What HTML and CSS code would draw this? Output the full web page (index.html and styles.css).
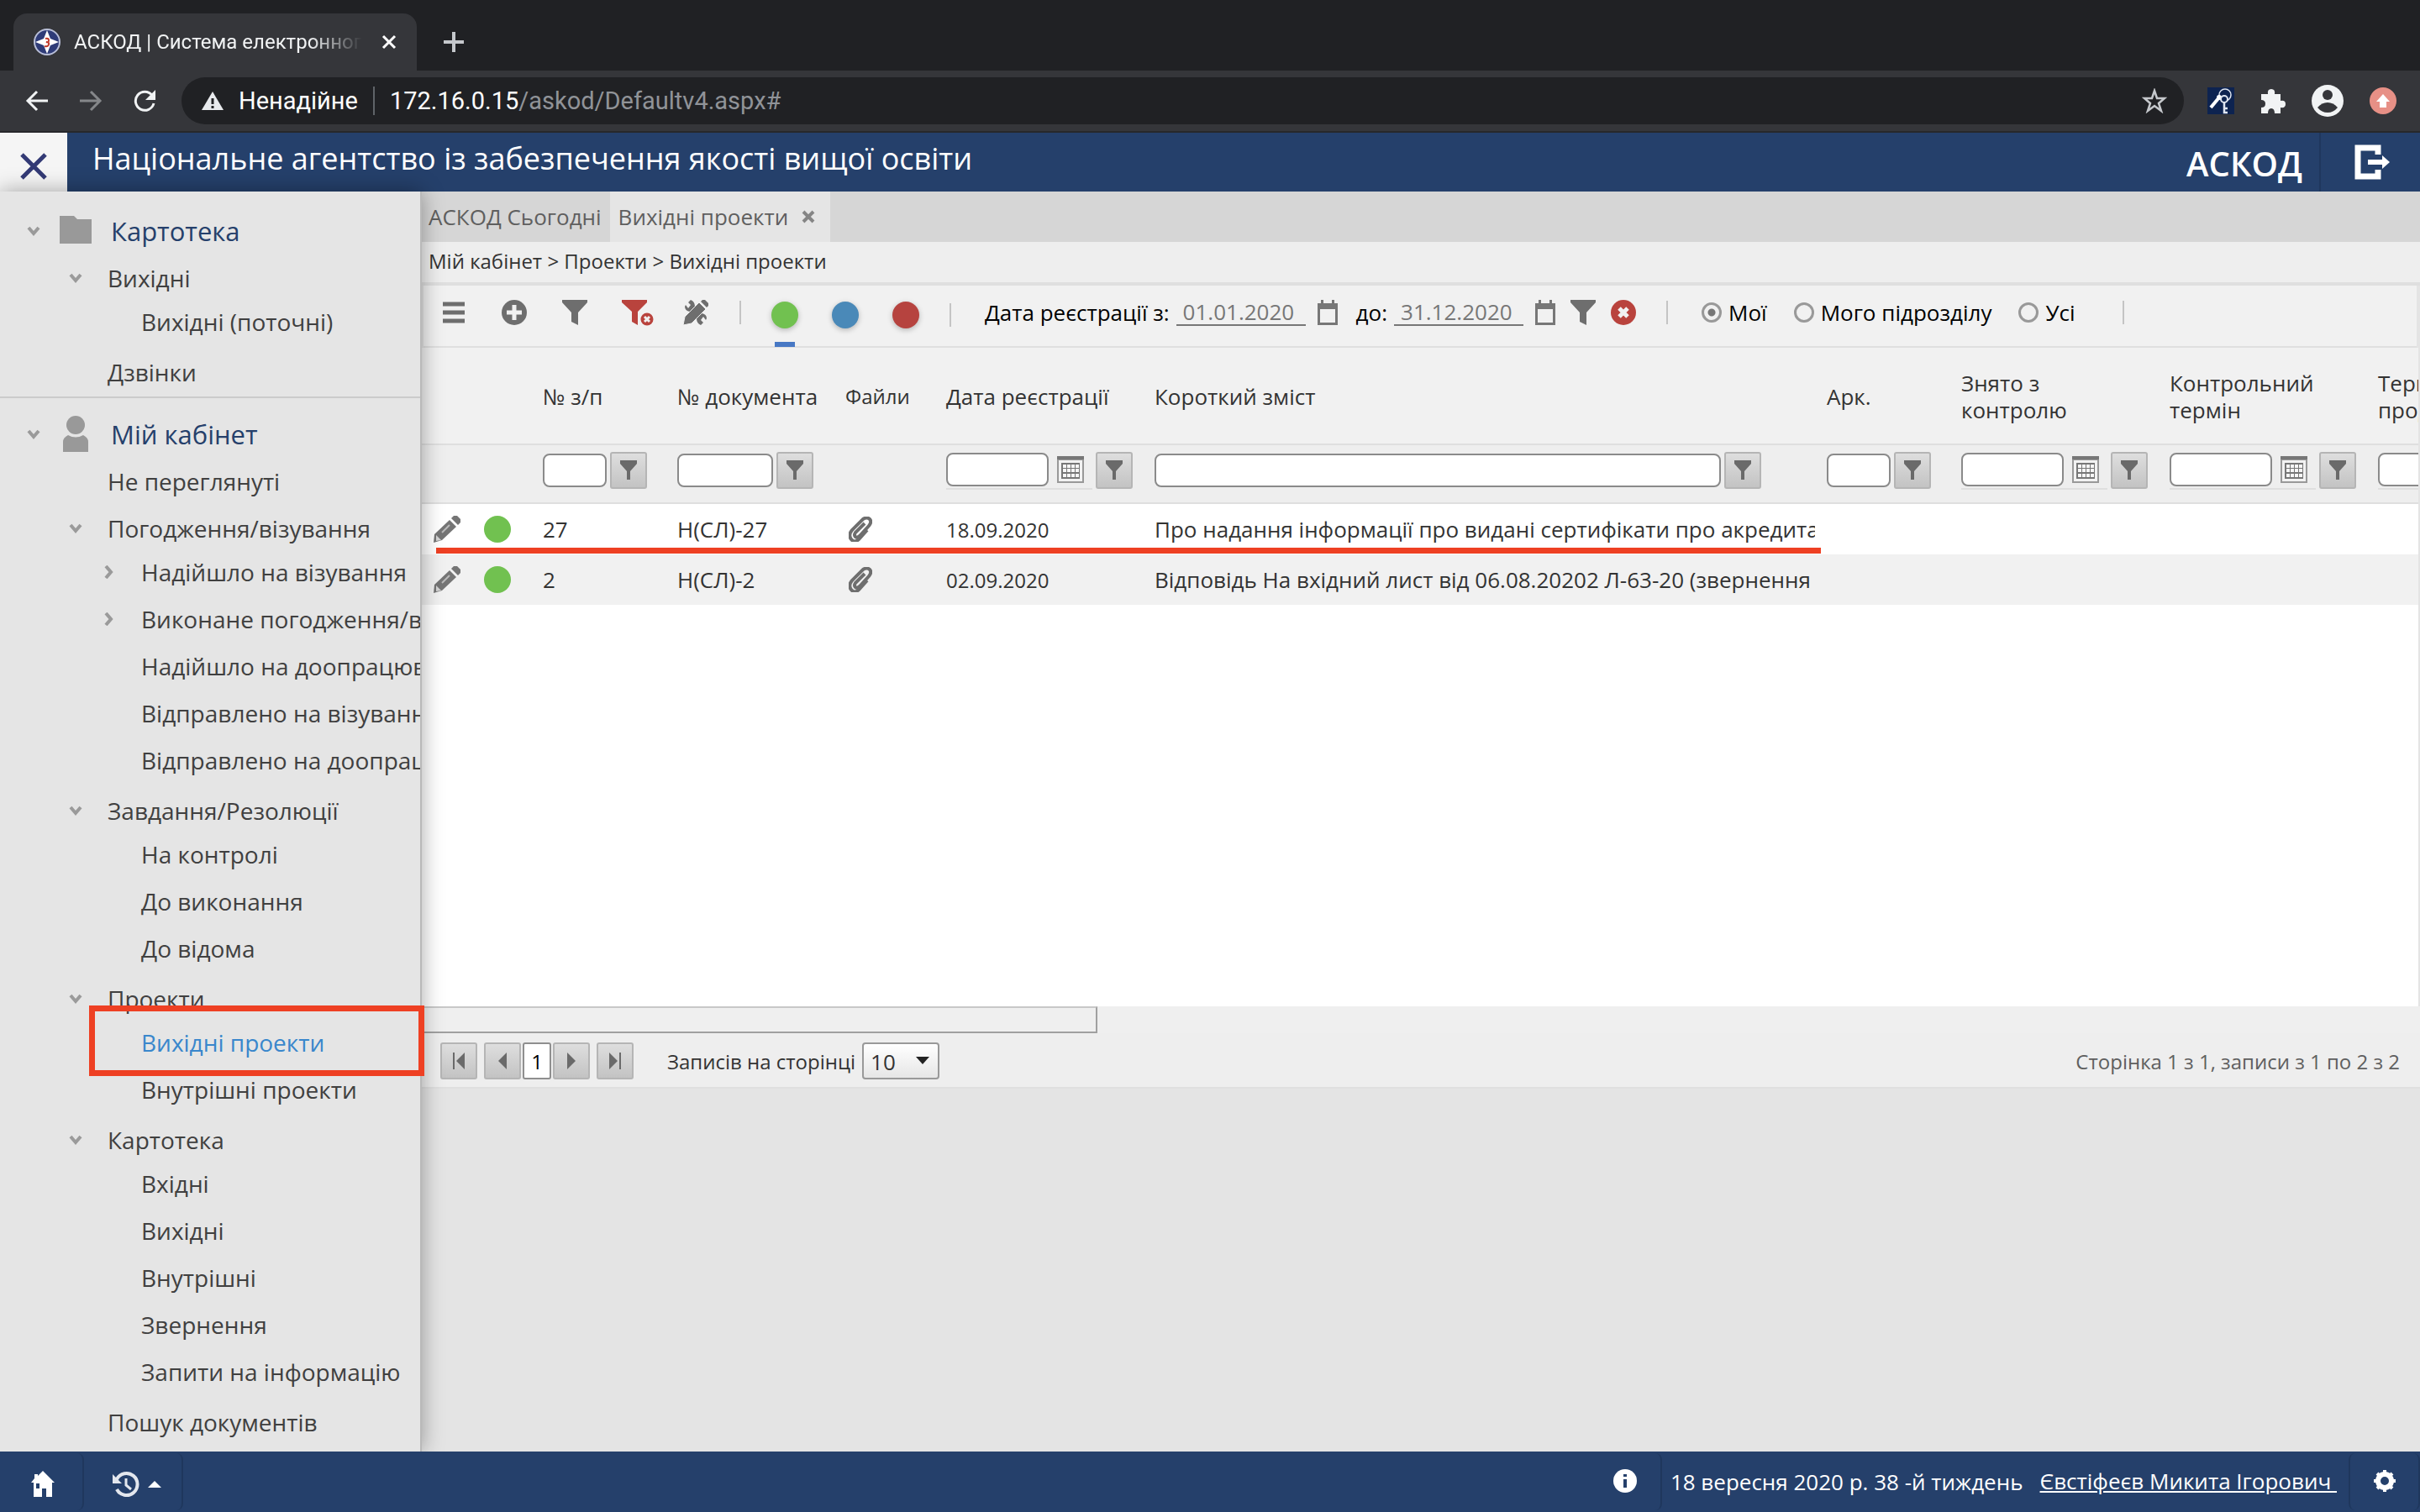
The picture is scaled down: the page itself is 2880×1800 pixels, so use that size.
FILE: index.html
```html
<!DOCTYPE html>
<html lang="uk">
<head>
    <meta charset="UTF-8">
    <meta name="viewport" content="width=device-width, initial-scale=1.0">
    <title>АСКОД | Система електронного документообігу</title>
    <link rel="stylesheet" href="styles.css">
</head>
<body>
    <!-- Shared icons -->
    <svg class="sprite" aria-hidden="true">
        <symbol id="i-down" viewBox="0 0 16 16"><path d="M2 4l6 7 6-7" fill="none" stroke="#9a9a9a" stroke-width="4"/></symbol>
        <symbol id="i-right" viewBox="0 0 16 16"><path d="M4 1l6 7-6 7" fill="none" stroke="#9a9a9a" stroke-width="4"/></symbol>
        <symbol id="i-funnel" viewBox="0 0 32 32"><path d="M1 1h30v3L20 16v15l-8-4V16L1 4z"/></symbol>
        <symbol id="i-funnel-sm" viewBox="0 0 22 24"><path d="M1 0h20v4l-8 9v10H9V13L1 4z" fill="#6a6a6a"/></symbol>
        <symbol id="i-calendar" viewBox="0 0 24 30"><path d="M4 0h3v4h10V0h3v4h4v26H0V4h4zM3 11v16h18V11z" fill="#777" fill-rule="evenodd"/></symbol>
        <symbol id="i-grid" viewBox="0 0 32 32"><path d="M0 0h32v32H0z" fill="#999"/><path d="M2 5h28v25H2z" fill="#f2f2f2"/><path d="M5 8h22v19H5z" fill="#777"/><path d="M7 10h4v4H7zM12 10h4v4h-4zM17 10h4v4h-4zM22 10h4v4h-4zM7 15h4v4H7zM12 15h4v4h-4zM17 15h4v4h-4zM22 15h4v4h-4zM7 21h4v4H7zM12 21h4v4h-4zM17 21h4v4h-4zM22 21h4v4h-4z" fill="#f6f6f6"/><path d="M0 0h32v4H0z" fill="#777"/></symbol>
        <symbol id="i-pencil" viewBox="0 0 32 32"><path d="M19 5l8 8L10 29 0 32l1-10z" fill="#757575"/><path d="M21 3l3-3h4l4 4v4l-3 3z" fill="#757575"/><path d="M3 23l6 6-6 1z" fill="#d5d5d5"/><path d="M10 20l9-9" stroke="#bbb" stroke-width="2"/></symbol>
        <symbol id="i-clip" viewBox="0 0 28 30"><path d="M19 8L8 19q-2 3 0 5t5-1L24 11q4-5 1-8t-8 0L4 16q-5 6-1 11t9 0l10-11" fill="none" stroke="#6e6e6e" stroke-width="4"/></symbol>
    </svg>

    <div class="browser">
        <div class="tab-strip">
            <div class="browser-tab">
                <svg class="favicon" viewBox="0 0 32 32"><circle cx="16" cy="16" r="15" fill="#2f3c78" stroke="#b9bfd8" stroke-width="2"/><path d="M16 2l4 10 10 4-10 4-4 10-4-10-10-4 10-4z" fill="#fff"/><path d="M14 12q4-1 4 2t-3 2q4 0 3 3t-5 2" fill="none" stroke="#c0392b" stroke-width="2"/></svg>
                <span class="tab-title">АСКОД | Система електронного</span>
                <button class="icon-btn" aria-label="Закрити вкладку"><svg width="18" height="18" viewBox="0 0 18 18"><path d="M2 2l14 14M16 2L2 16" stroke="#fff" stroke-width="3"/></svg></button>
            </div>
            <button class="icon-btn new-tab" aria-label="Нова вкладка"><svg width="26" height="26" viewBox="0 0 26 26"><path d="M13 1v24M1 13h24" stroke="#c5c8cc" stroke-width="4"/></svg></button>
        </div>
        <div class="nav-bar">
            <button class="icon-btn" aria-label="Назад"><svg width="28" height="28" viewBox="0 0 28 28"><path d="M27 14H3M14 3L3 14l11 11" fill="none" stroke="#f1f3f4" stroke-width="3"/></svg></button>
            <button class="icon-btn" aria-label="Вперед"><svg width="28" height="28" viewBox="0 0 28 28"><path d="M1 14h24M14 3l11 11-11 11" fill="none" stroke="#85878a" stroke-width="3"/></svg></button>
            <button class="icon-btn" aria-label="Оновити"><svg width="28" height="28" viewBox="0 0 28 28"><path d="M23 7.500A11 11 0 1 0 25 17" fill="none" stroke="#f1f3f4" stroke-width="3"/><path d="M27 1v12H15z" fill="#f1f3f4"/></svg></button>
            <div class="omnibox">
                <svg width="26" height="24" viewBox="0 0 26 24"><path d="M13 1l13 22H0z" fill="#e8eaed"/><path d="M13 9v7M13 18v3" stroke="#202124" stroke-width="3"/></svg>
                <span class="insecure">Ненадійне</span>
                <div class="url" role="textbox" contenteditable="true" spellcheck="false" aria-label="Адреса">172.16.0.15<span>/askod/Defaultv4.aspx#</span></div>
                <button class="icon-btn" aria-label="Додати закладку"><svg width="30" height="30" viewBox="0 0 30 30"><path d="M15 3l3 9h9l-7 6 3 9-8-6-8 6 3-9-7-6h9z" fill="none" stroke="#c5c8cc" stroke-width="2.500"/></svg></button>
            </div>
            <div class="extensions">
                <button class="icon-btn" aria-label="Ключі"><svg width="32" height="32" viewBox="0 0 32 32"><path d="M0 0h32v32H0z" fill="#0d2350"/><circle cx="21" cy="9" r="7" fill="none" stroke="#dfe5f0" stroke-width="1.500"/><path d="M14 12L4 24" stroke="#fff" stroke-width="4"/><circle cx="14" cy="12" r="3" fill="#fff"/><circle cx="20" cy="14" r="4" fill="#0d2350" stroke="#dfe5f0" stroke-width="2"/><path d="M20 18v12h4M21 25h3" stroke="#dfe5f0" stroke-width="2.500" fill="none"/></svg></button>
                <button class="icon-btn" aria-label="Розширення"><svg width="30" height="30" viewBox="0 0 30 30"><path d="M1 7h8q-1-6 4-6t4 6h7v8q6-1 6 4t-6 4v7h-7q0-6-4-6t-4 6H1v-7q5 0 5-4.500T1 14z" fill="#f1f3f4"/></svg></button>
                <button class="icon-btn" aria-label="Профіль"><svg width="38" height="38" viewBox="0 0 38 38"><circle cx="19" cy="19" r="19" fill="#f1f3f4"/><circle cx="19" cy="12" r="6" fill="#35363a"/><path d="M7 27q5-6 12-6t12 6q-5 6-12 6T7 27z" fill="#35363a"/></svg></button>
                <button class="icon-btn" aria-label="Оновлення"><svg width="32" height="32" viewBox="0 0 32 32"><circle cx="16" cy="16" r="16" fill="#e79086"/><path d="M16 8l8 9h-4v7h-8v-7H8z" fill="#fff"/></svg></button>
            </div>
        </div>
    </div>

    <header class="app-header">
        <button class="menu-close" aria-label="Закрити меню"><svg width="32" height="32" viewBox="0 0 32 32"><path d="M2 2l28 28M30 2L2 30" stroke="#333a75" stroke-width="5"/></svg></button>
        <h1>Національне агентство із забезпечення якості вищої освіти</h1>
        <span class="brand">АСКОД</span>
        <button class="logout" aria-label="Вийти"><svg width="42" height="42" viewBox="0 0 42 42"><path d="M28 12V4H4v34h24v-8" fill="none" stroke="#fff" stroke-width="7"/><path d="M16 18h17v-5l9 8-9 8v-5H16z" fill="#fff"/></svg></button>
    </header>

    <div class="workspace">
        <nav class="sidebar">
            <section>
                <h2>
                    <svg class="chev"><use href="#i-down"/></svg>
                    <svg class="section-icon" viewBox="0 0 40 44"><path d="M1 4h17l4 4h17v29H1z" fill="#999"/></svg>
                    Картотека
                </h2>
                <ul class="level-2">
                    <li>
                        <a href="#"><svg class="chev"><use href="#i-down"/></svg>Вихідні</a>
                        <ul class="level-3">
                            <li><a href="#">Вихідні (поточні)</a></li>
                        </ul>
                    </li>
                    <li><a href="#">Дзвінки</a></li>
                </ul>
            </section>
            <section>
                <h2>
                    <svg class="chev"><use href="#i-down"/></svg>
                    <svg class="section-icon" viewBox="0 0 40 44"><ellipse cx="20" cy="11" rx="11" ry="11" fill="#999"/><path d="M5 43V31q0-5 6-8 9 5 18 0 6 3 6 8v12z" fill="#999"/></svg>
                    Мій кабінет
                </h2>
                <ul class="level-2">
                    <li><a href="#">Не переглянуті</a></li>
                    <li>
                        <a href="#"><svg class="chev"><use href="#i-down"/></svg>Погодження/візування</a>
                        <ul class="level-3">
                            <li><a href="#"><svg class="chev"><use href="#i-right"/></svg>Надійшло на візування</a></li>
                            <li><a href="#"><svg class="chev"><use href="#i-right"/></svg>Виконане погодження/візування</a></li>
                            <li><a href="#">Надійшло на доопрацювання</a></li>
                            <li><a href="#">Відправлено на візування</a></li>
                            <li><a href="#">Відправлено на доопрацювання</a></li>
                        </ul>
                    </li>
                    <li>
                        <a href="#"><svg class="chev"><use href="#i-down"/></svg>Завдання/Резолюції</a>
                        <ul class="level-3">
                            <li><a href="#">На контролі</a></li>
                            <li><a href="#">До виконання</a></li>
                            <li><a href="#">До відома</a></li>
                        </ul>
                    </li>
                    <li>
                        <a href="#"><svg class="chev"><use href="#i-down"/></svg>Проекти</a>
                        <ul class="level-3">
                            <li class="active"><a href="#">Вихідні проекти</a></li>
                            <li><a href="#">Внутрішні проекти</a></li>
                        </ul>
                    </li>
                    <li>
                        <a href="#"><svg class="chev"><use href="#i-down"/></svg>Картотека</a>
                        <ul class="level-3">
                            <li><a href="#">Вхідні</a></li>
                            <li><a href="#">Вихідні</a></li>
                            <li><a href="#">Внутрішні</a></li>
                            <li><a href="#">Звернення</a></li>
                            <li><a href="#">Запити на інформацію</a></li>
                        </ul>
                    </li>
                    <li><a href="#">Пошук документів</a></li>
                </ul>
            </section>
        </nav>

        <main>
            <div class="page-tabs">
                <a href="#" class="page-tab">АСКОД Сьогодні</a>
                <div class="page-tab current">
                    <a href="#">Вихідні проекти</a>
                    <button class="icon-btn" aria-label="Закрити"><svg width="16" height="16" viewBox="0 0 16 16"><path d="M2 2l12 12M14 2L2 14" stroke="#858585" stroke-width="4"/></svg></button>
                </div>
            </div>
            <div class="breadcrumb">Мій кабінет &gt; Проекти &gt; Вихідні проекти</div>

            <div class="toolbar">
                <div class="tools">
                    <button class="icon-btn" aria-label="Меню"><svg width="32" height="32" viewBox="0 0 32 32"><path d="M3 6h26M3 16h26M3 26h26" stroke="#6e6e6e" stroke-width="5"/></svg></button>
                    <button class="icon-btn" aria-label="Додати"><svg width="32" height="32" viewBox="0 0 32 32"><circle cx="16" cy="16" r="15" fill="#6e6e6e"/><path d="M16 7v18M7 16h18" stroke="#f1f1f1" stroke-width="5"/></svg></button>
                    <button class="icon-btn" aria-label="Фільтр"><svg width="32" height="32" fill="#6e6e6e"><use href="#i-funnel"/></svg></button>
                    <button class="icon-btn reset" aria-label="Скинути фільтр"><svg width="38" height="32" viewBox="0 0 38 32"><path d="M0 1h30v3L19 15v16l-7-4V15L0 4z" fill="#b9433d"/><circle cx="30" cy="24" r="7.500" fill="#b9433d"/><path d="M27 21l6 6M33 21l-6 6" stroke="#f1f1f1" stroke-width="3"/></svg></button>
                    <button class="icon-btn" aria-label="Налаштування"><svg width="32" height="32" viewBox="0 0 32 32"><path d="M10 10l12 12" stroke="#6e6e6e" stroke-width="6"/><path d="M3 9q0 5 6 6l6-6q0-6-5-8L7 4l3 3-3 4-3-4zM29 23q0-5-6-6l-6 6q0 6 5 8l3-3-3-3 3-4 3 4z" fill="#6e6e6e"/><path d="M1 31l2-10L20 4l8 8L11 29z" fill="#6e6e6e" stroke="#f1f1f1"/><path d="M22 3l2-2h3l4 4v3l-2 2z" fill="#6e6e6e"/></svg></button>
                </div>
                <div class="states">
                    <button class="dot green selected" aria-label="Зелені"></button>
                    <button class="dot blue" aria-label="Сині"></button>
                    <button class="dot red" aria-label="Червоні"></button>
                </div>
                <div class="period">
                    <label for="dateFrom">Дата реєстрації з:</label>
                    <input type="text" id="dateFrom" value="01.01.2020">
                    <button class="icon-btn" aria-label="Календар"><svg width="24" height="30"><use href="#i-calendar"/></svg></button>
                    <label for="dateTo" class="label-to">до:</label>
                    <input type="text" id="dateTo" value="31.12.2020">
                    <button class="icon-btn" aria-label="Календар"><svg width="24" height="30"><use href="#i-calendar"/></svg></button>
                    <button class="icon-btn apply" aria-label="Застосувати"><svg width="32" height="32" fill="#6e6e6e"><use href="#i-funnel"/></svg></button>
                    <button class="icon-btn apply" aria-label="Очистити"><svg width="30" height="30" viewBox="0 0 30 30"><circle cx="15" cy="15" r="15" fill="#b9433d"/><path d="M10 10l10 10M20 10L10 20" stroke="#f1f1f1" stroke-width="5"/></svg></button>
                </div>
                <div class="owner">
                    <label><input type="radio" name="owner" checked>Мої</label>
                    <label><input type="radio" name="owner">Мого підрозділу</label>
                    <label><input type="radio" name="owner">Усі</label>
                </div>
            </div>

            <div class="grid">
                <table>
                    <colgroup>
                        <col class="c-edit"><col class="c-state"><col class="c-num"><col class="c-doc"><col class="c-files"><col class="c-date"><col class="c-text"><col class="c-num"><col class="c-date"><col class="c-date"><col class="c-date">
                    </colgroup>
                    <thead>
                        <tr>
                            <th></th>
                            <th></th>
                            <th>№ з/п</th>
                            <th>№ документа</th>
                            <th class="small">Файли</th>
                            <th>Дата реєстрації</th>
                            <th>Короткий зміст</th>
                            <th>Арк.</th>
                            <th>Знято з<br>контролю</th>
                            <th>Контрольний<br>термін</th>
                            <th>Термін<br>продовження</th>
                        </tr>
                        <tr class="filters">
                            <td></td>
                            <td></td>
                            <td><div class="filter"><input type="text" aria-label="№ з/п"><button aria-label="Фільтр"><svg width="22" height="24"><use href="#i-funnel-sm"/></svg></button></div></td>
                            <td><div class="filter"><input type="text" class="f-doc" aria-label="№ документа"><button aria-label="Фільтр"><svg width="22" height="24"><use href="#i-funnel-sm"/></svg></button></div></td>
                            <td></td>
                            <td><div class="filter"><span class="date-box"><input type="text" aria-label="Дата реєстрації"><svg width="32" height="32"><use href="#i-grid"/></svg></span><button aria-label="Фільтр"><svg width="22" height="24"><use href="#i-funnel-sm"/></svg></button></div></td>
                            <td><div class="filter"><input type="text" class="f-text" aria-label="Короткий зміст"><button aria-label="Фільтр"><svg width="22" height="24"><use href="#i-funnel-sm"/></svg></button></div></td>
                            <td><div class="filter"><input type="text" aria-label="Арк."><button aria-label="Фільтр"><svg width="22" height="24"><use href="#i-funnel-sm"/></svg></button></div></td>
                            <td><div class="filter"><span class="date-box"><input type="text" aria-label="Знято з контролю"><svg width="32" height="32"><use href="#i-grid"/></svg></span><button aria-label="Фільтр"><svg width="22" height="24"><use href="#i-funnel-sm"/></svg></button></div></td>
                            <td><div class="filter"><span class="date-box"><input type="text" aria-label="Контрольний термін"><svg width="32" height="32"><use href="#i-grid"/></svg></span><button aria-label="Фільтр"><svg width="22" height="24"><use href="#i-funnel-sm"/></svg></button></div></td>
                            <td><div class="filter"><span class="date-box"><input type="text" aria-label="Термін продовження"><svg width="32" height="32"><use href="#i-grid"/></svg></span></div></td>
                        </tr>
                    </thead>
                    <tbody>
                        <tr class="marked">
                            <td><svg width="32" height="32"><use href="#i-pencil"/></svg></td>
                            <td><span class="dot green"></span></td>
                            <td>27</td>
                            <td>Н(СЛ)-27</td>
                            <td class="files"><svg width="28" height="30"><use href="#i-clip"/></svg></td>
                            <td class="small">18.09.2020</td>
                            <td>Про надання інформації про видані сертифікати про акредитацію</td>
                            <td></td><td></td><td></td><td></td>
                        </tr>
                        <tr>
                            <td><svg width="32" height="32"><use href="#i-pencil"/></svg></td>
                            <td><span class="dot green"></span></td>
                            <td>2</td>
                            <td>Н(СЛ)-2</td>
                            <td class="files"><svg width="28" height="30"><use href="#i-clip"/></svg></td>
                            <td class="small">02.09.2020</td>
                            <td>Відповідь На вхідний лист від 06.08.20202 Л-63-20 (звернення</td>
                            <td></td><td></td><td></td><td></td>
                        </tr>
                    </tbody>
                </table>
            </div>
            <div class="scrollbar"><div class="thumb"></div></div>

            <div class="pager">
                <button aria-label="Перша"><svg width="16" height="20" viewBox="0 0 16 20"><path d="M1 0h2v20H1zM15 0v20L5 10z" fill="#6a6a6a"/></svg></button>
                <button class="gap-left" aria-label="Попередня"><svg width="16" height="20" viewBox="0 0 16 20"><path d="M13 0v20L3 10z" fill="#6a6a6a"/></svg></button>
                <button class="page-num">1</button>
                <button aria-label="Наступна"><svg width="16" height="20" viewBox="0 0 16 20"><path d="M3 0v20l10-10z" fill="#6a6a6a"/></svg></button>
                <button class="gap-left" aria-label="Остання"><svg width="16" height="20" viewBox="0 0 16 20"><path d="M13 0h2v20h-2zM1 0v20l10-10z" fill="#6a6a6a"/></svg></button>
                <label for="pageSize">Записів на сторінці</label>
                <span class="select">
                    <select id="pageSize">
                        <option>10</option>
                        <option>20</option>
                        <option>50</option>
                    </select>
                </span>
                <span class="summary">Сторінка 1 з 1, записи з 1 по 2 з 2</span>
            </div>
        </main>
    </div>

    <footer>
        <button class="foot-btn" aria-label="Додому"><svg width="28" height="32" viewBox="0 0 28 32"><path d="M14 0l14 14h-3v17h-7V21h-5v10H3V14H0l4-5V4h4v2z" fill="#fff"/><path d="M6 15h4v6H6z" fill="#25406b"/></svg></button>
        <button class="foot-btn history" aria-label="Історія"><svg width="32" height="32" viewBox="0 0 32 32"><path d="M5 10A13 13 0 1 1 5 22" fill="none" stroke="#e3e7ee" stroke-width="4"/><path d="M0 4v11h11z" fill="#e3e7ee"/><path d="M16 9v8l6 5" fill="none" stroke="#e3e7ee" stroke-width="3"/></svg><svg width="16" height="8" viewBox="0 0 16 8"><path d="M8 0l8 8H0z" fill="#fff"/></svg></button>
        <button class="foot-btn info" aria-label="Інформація"><svg width="30" height="30" viewBox="0 0 30 30"><circle cx="15" cy="15" r="14" fill="#fff"/><path d="M15 7v3M15 13v10" stroke="#25406b" stroke-width="4"/></svg></button>
        <span class="today">18 вересня 2020 р. 38 -й тиждень</span>
        <a href="#" class="user">Євстіфеєв Микита Ігорович&nbsp;</a>
        <button class="foot-btn settings" aria-label="Налаштування"><svg width="28" height="28" viewBox="0 0 28 28"><circle cx="14" cy="14" r="8" fill="none" stroke="#fff" stroke-width="6"/><path d="M14 1v4M14 23v4M1 14h4M23 14h4M5 5l3 3M20 20l3 3M23 5l-3 3M5 23l3-3" stroke="#fff" stroke-width="4"/></svg></button>
    </footer>
</body>
</html>
```

FILE: styles.css
```css
* {
    box-sizing: border-box;
}
body {
    margin: 0;
    min-height: 100vh;
    display: flex;
    flex-direction: column;
    overflow-x: hidden;
    font-family: 'Open Sans', 'Noto Sans', sans-serif;
    font-size: 26px;
    color: #333;
    background: #e4e4e4;
}
button, input, select {
    font: inherit;
    color: inherit;
}
button {
    padding: 0;
    border: none;
    background: none;
    cursor: pointer;
}
a {
    color: inherit;
    text-decoration: none;
}
svg {
    display: block;
    flex: none;
}
ul {
    list-style: none;
    margin: 0;
    padding: 0;
}
.sprite {
    position: absolute;
    width: 0;
    height: 0;
}
.icon-btn {
    display: flex;
    align-items: center;
    justify-content: center;
}

/* Browser frame */
.browser {
    font-family: Roboto, sans-serif;
    background: #202124;
    border-bottom: 2px solid #27282b;
}
.tab-strip {
    display: flex;
    align-items: center;
    height: 84px;
    padding: 16px 16px 0;
}
.browser-tab {
    display: flex;
    align-items: center;
    width: 480px;
    height: 68px;
    padding: 0 24px;
    border-radius: 16px 16px 0 0;
    background: #35363a;
    color: #f1f3f4;
    font-size: 24px;
}
.favicon {
    width: 32px;
    height: 32px;
}
.tab-title {
    flex: 1;
    margin: 0 16px;
    overflow: hidden;
    white-space: nowrap;
    -webkit-mask-image: linear-gradient(to right, #000 80%, transparent 98%);
    mask-image: linear-gradient(to right, #000 80%, transparent 98%);
}
.new-tab {
    margin-left: 31px;
}
.nav-bar {
    display: flex;
    align-items: center;
    gap: 36px;
    height: 72px;
    padding: 0 28px 0 30px;
    background: #35363a;
}
.omnibox {
    flex: 1;
    display: flex;
    align-items: center;
    height: 56px;
    margin-left: -6px;
    padding: 0 20px 0 24px;
    border-radius: 28px;
    background: #202124;
    color: #fff;
    font-size: 29px;
}
.insecure {
    margin-left: 18px;
    padding-right: 18px;
    border-right: 2px solid #5f6368;
}
.url {
    flex: 1;
    margin-left: 18px;
    outline: none;
}
.url span {
    color: #909398;
}
.extensions {
    display: flex;
    align-items: center;
    gap: 31px;
    margin-left: -8px;
}

/* Application header */
.app-header {
    display: flex;
    align-items: center;
    height: 70px;
    background: #25406b;
    color: #fff;
}
.menu-close {
    display: flex;
    align-items: center;
    justify-content: center;
    width: 80px;
    height: 70px;
    padding-top: 10px;
    background: #f5f5f5;
}
.app-header h1 {
    flex: 1;
    margin: 0;
    padding: 0 0 10px 30px;
    font-size: 36px;
    font-weight: 400;
}
.brand {
    padding: 2px 20px 0 0;
    font-size: 40px;
    font-weight: 600;
}
.logout {
    display: flex;
    align-items: center;
    justify-content: center;
    width: 120px;
    height: 70px;
    padding-left: 4px;
    border-left: 2px solid #1f375d;
}

/* Layout */
.workspace {
    flex: 1;
    display: flex;
}
.sidebar {
    position: relative;
    z-index: 1;
    flex: none;
    width: 502px;
    padding-top: 24px;
    border-right: 2px solid #b9b9b9;
    background: #e5e5e5;
    box-shadow: 0 0 24px rgba(0, 0, 0, 0.35);
    color: #404040;
    font-size: 28px;
}
.sidebar section + section {
    margin-top: 4px;
    padding-top: 20px;
    border-top: 2px solid #cbcbcb;
}
.sidebar h2 {
    display: flex;
    align-items: center;
    height: 48px;
    margin: 0;
    padding: 0 0 2px 32px;
    color: #25406b;
    font-size: 31px;
    font-weight: 500;
}
.section-icon {
    width: 40px;
    height: 44px;
    margin: 0 22px;
}
.chev {
    width: 16px;
    height: 16px;
}
.sidebar a {
    display: flex;
    align-items: center;
    padding-bottom: 2px;
    overflow: hidden;
    white-space: nowrap;
}
.sidebar a .chev {
    margin-right: 30px;
    margin-left: -46px;
}
.level-2 > li > a {
    height: 48px;
    margin-top: 8px;
    padding-left: 128px;
}
.level-3 a {
    height: 56px;
    padding-left: 168px;
}
.sidebar .active {
    position: relative;
    color: #3987cc;
}
.active::after {
    content: '';
    position: absolute;
    inset: -17px -5px -11px 106px;
    border: 7px solid #ee4023;
}
main {
    flex: 1;
    min-width: 0;
}

/* Page tabs */
.page-tabs {
    display: flex;
    height: 60px;
    background: #d6d6d6;
    color: #5f5f5f;
}
.page-tab {
    display: flex;
    align-items: center;
    gap: 16px;
    padding: 0 10px 0 8px;
}
.page-tab.current {
    padding: 0 18px 0 10px;
    background: #e5e5e5;
}
.breadcrumb {
    height: 52px;
    padding-left: 8px;
    border-bottom: 4px solid #dfdfdf;
    background: #eee;
    font-size: 24px;
    line-height: 46px;
}

/* Toolbar */
.toolbar {
    display: flex;
    align-items: center;
    height: 74px;
    margin: 0 4px 0 2px;
    padding: 0 0 8px 20px;
    border-bottom: 2px solid #dfdfdf;
    background: #f1f1f1;
    color: #000;
}
.tools, .states, .period, .owner {
    display: flex;
    align-items: center;
}
.tools {
    gap: 40px;
}
.tools::after, .states::after, .period::after, .owner::after {
    content: '';
    width: 2px;
    height: 28px;
    background: #c4c4c4;
}
.tools::after {
    margin-left: -4px;
}
.reset {
    margin-right: -6px;
}
.states {
    gap: 40px;
    margin: 6px 0 0 36px;
}
.states::after {
    margin-left: -4px;
}
.dot {
    display: block;
    position: relative;
    width: 32px;
    height: 32px;
    border-radius: 50%;
}
.states .dot {
    box-shadow: 0 2px 6px rgba(0, 0, 0, 0.25);
}
.green {
    background: #71c150;
}
.blue {
    background: #4a89b8;
}
.red {
    background: #b6433f;
}
.selected::after {
    content: '';
    position: absolute;
    left: 4px;
    bottom: -22px;
    width: 24px;
    height: 6px;
    background: #4778c4;
}
.period {
    margin-left: 40px;
}
.period input {
    width: 154px;
    height: 32px;
    margin: 0 14px 0 8px;
    padding: 0 8px;
    border: none;
    border-bottom: 2px solid #777;
    background: none;
    color: #777;
}
.label-to {
    margin-left: 22px;
}
.apply {
    margin-left: 17px;
}
.period::after {
    margin-left: 36px;
}
.owner {
    gap: 32px;
    margin-left: 40px;
}
.owner label {
    display: flex;
    align-items: center;
    gap: 8px;
}
.owner input {
    appearance: none;
    width: 24px;
    height: 24px;
    margin: 0;
    border: 3px solid #999;
    border-radius: 50%;
}
.owner input:checked {
    background: radial-gradient(circle, #777 4px, transparent 5px);
}
.owner::after {
    margin-left: 24px;
}

/* Data grid */
.grid {
    min-height: 784px;
    overflow: hidden;
    margin-right: 2px;
    background: #fff;
}
table {
    width: 2562px;
    table-layout: fixed;
    border-collapse: separate;
    border-spacing: 0;
}
.c-edit {
    width: 60px;
}
.c-state {
    width: 70px;
}
.c-num {
    width: 160px;
}
.c-doc {
    width: 200px;
}
.c-files {
    width: 120px;
}
.c-date {
    width: 248px;
}
.c-text {
    width: 800px;
}
th, td {
    padding: 0 0 0 14px;
    overflow: hidden;
    text-align: left;
    font-weight: 400;
    white-space: nowrap;
}
th {
    height: 116px;
    padding-top: 2px;
    border-bottom: 2px solid #dfdfdf;
    background: #f1f1f1;
    line-height: 32px;
}
.filters td {
    height: 70px;
    padding-bottom: 8px;
    border-bottom: 2px solid #dfdfdf;
    background: #eee;
}
tbody td {
    height: 60px;
}
tbody tr:nth-child(even) {
    background: #f1f1f1;
}
.files {
    padding-left: 18px;
}
.small {
    font-size: 24px;
}
.marked {
    position: relative;
}
.marked::after {
    content: '';
    position: absolute;
    left: 17px;
    bottom: 1px;
    width: 1648px;
    height: 7px;
    background: #ee4023;
}
.filter {
    display: flex;
    align-items: center;
    gap: 4px;
}
.filter input {
    width: 76px;
    height: 40px;
    padding: 0 8px;
    border: 2px solid #8a8a8a;
    border-radius: 8px;
    background: #fff;
}
.filter .f-doc {
    width: 114px;
}
.filter .f-text {
    width: 674px;
}
.date-box {
    display: flex;
    align-items: center;
    gap: 10px;
    width: 174px;
    height: 46px;
    border-bottom: 2px solid #dfdfdf;
}
.date-box input {
    width: 122px;
}
.filter button, .pager button {
    display: flex;
    align-items: center;
    justify-content: center;
    width: 44px;
    height: 44px;
    border: 2px solid #b5b5b5;
    border-radius: 3px;
    background: linear-gradient(#dedede, #c3c3c3);
}

/* Horizontal scroll */
.scrollbar {
    height: 32px;
    background: #efefef;
}
.thumb {
    width: 33.8%;
    height: 32px;
    border: 2px solid #a0a0a0;
    border-top-color: #c8c8c8;
    border-left: none;
}

/* Pager */
.pager {
    display: flex;
    align-items: center;
    gap: 2px;
    height: 66px;
    padding: 2px 24px 0 22px;
    border-bottom: 2px solid #dfdfdf;
    background: #eee;
    font-size: 24px;
}
.pager .gap-left {
    margin-left: 6px;
}
.pager .page-num {
    width: 34px;
    border-color: #8f8f8f;
    background: #fff;
    color: #000;
}
.pager label {
    margin: 0 6px 0 38px;
}
.select {
    position: relative;
}
.select::after {
    content: '';
    position: absolute;
    top: 17px;
    right: 12px;
    border: 8px solid transparent;
    border-top: 9px solid #222;
    pointer-events: none;
}
.select select {
    appearance: none;
    display: block;
    width: 92px;
    height: 44px;
    padding: 2px 8px 0;
    border: 2px solid #999;
    border-radius: 4px;
    background: linear-gradient(#fff, #e6e6e6);
    font-size: 26px;
}
.summary {
    margin-left: auto;
    color: #5f5f5f;
}

/* Status bar */
footer {
    position: relative;
    z-index: 2;
    display: flex;
    align-items: center;
    height: 72px;
    background: #25406b;
    color: #fff;
}
.foot-btn {
    display: flex;
    align-items: center;
    justify-content: center;
    gap: 10px;
    width: 100px;
    height: 68px;
    padding: 6px 0 0 4px;
    border-right: 2px solid #1f375d;
    border-radius: 8px;
}
.history {
    width: 118px;
    padding-left: 10px;
}
.info {
    width: 86px;
    margin-left: auto;
    padding: 0 0 2px;
}
.today {
    margin: 0 20px 0 10px;
}
.user {
    margin-right: 14px;
    padding-bottom: 2px;
    text-decoration: underline;
}
.settings {
    width: 85px;
    padding: 0 0 2px;
    border-left: 2px solid #1f375d;
}
```
